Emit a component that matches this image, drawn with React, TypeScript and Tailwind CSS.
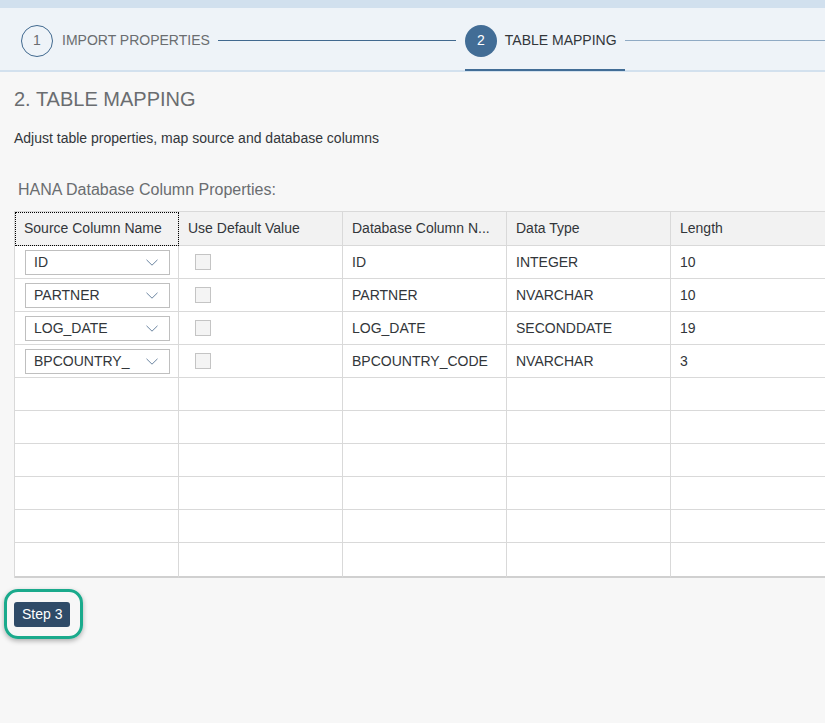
const ROWS = [
  { src: "ID", db: "ID", type: "INTEGER", len: "10" },
  { src: "PARTNER", db: "PARTNER", type: "NVARCHAR", len: "10" },
  { src: "LOG_DATE", db: "LOG_DATE", type: "SECONDDATE", len: "19" },
  { src: "BPCOUNTRY_", db: "BPCOUNTRY_CODE", type: "NVARCHAR", len: "3" },
];

const HEADERS = ["Source Column Name", "Use Default Value", "Database Column N...", "Data Type", "Length"];

const cell = "h-[33px] border-r border-b border-[#d9d9d9] bg-white flex items-center";

function Chevron() {
  return (
    <svg width="12" height="7" viewBox="0 0 12 7" fill="none" className="mr-[11px]">
      <path d="M0.5 0.8 L6 6.2 L11.5 0.8" stroke="#6a84a0" strokeWidth="1" />
    </svg>
  );
}

export default function App() {
  return (
    <div className="w-[825px] h-[723px] overflow-hidden bg-[#f7f7f7] font-['Liberation_Sans',Arial,sans-serif] text-[#32363a]">
      {/* wizard header */}
      <div className="h-2 bg-[#d1e0ee]" />
      <div className="h-[64px] bg-[#eef3f8] border-b-2 border-[#d3e1ee] flex items-center pl-[21px] pt-[3px]">
        <div className="w-8 h-8 rounded-full border border-[#41698f] flex items-center justify-center text-[14px] text-[#6a6d70]">1</div>
        <span className="ml-[9px] text-[14px] text-[#6a6d70]">IMPORT PROPERTIES</span>
        <div className="ml-2 w-[238px] h-px bg-[#41698f]" />
        <div className="relative ml-[9px] flex items-center h-full">
          <div className="w-8 h-8 rounded-full bg-[#426d96] flex items-center justify-center text-[14px] text-white">2</div>
          <span className="ml-[8px] text-[14px] text-[#32363a]">TABLE MAPPING</span>
          <div className="absolute left-0 w-[160px] -bottom-[1px] h-[2px] bg-[#426d96]" />
        </div>
        <div className="ml-2 flex-1 h-px bg-[#8faac4]" />
      </div>

      <div className="px-[14px]">
        <h1 className="mt-[15px] text-[20px] leading-6 text-[#6a6d70]">2. TABLE MAPPING</h1>
        <p className="mt-[19px] text-[14px] leading-4">Adjust table properties, map source and database columns</p>
        <h2 className="mt-[34px] ml-1 text-[16px] leading-5 text-[#6a6d70]">HANA Database Column Properties:</h2>

        <div className="mt-[11px] w-[900px] border-l border-t border-[#d9d9d9]">
          <div className="grid grid-cols-[164px_164px_164px_164px_244px]">
            {HEADERS.map((h, i) => (
              <div
                key={h}
                className={`h-[34px] border-r border-b border-[#d9d9d9] bg-[#f2f2f2] flex items-center pl-[9px] text-[14px] ${
                  i === 0 ? "outline outline-1 outline-dotted outline-black -outline-offset-1" : ""
                }`}
              >
                {h}
              </div>
            ))}
          </div>
          {ROWS.map((r) => (
            <div key={r.src} className="grid grid-cols-[164px_164px_164px_164px_244px] text-[14px]">
              <div className={cell + " pl-[10px]"}>
                <div className="w-[145px] h-[25px] border border-[#bfbfbf] bg-white flex items-center justify-between pl-[8px]">
                  <span>{r.src}</span>
                  <Chevron />
                </div>
              </div>
              <div className={cell + " pl-4"}>
                <div className="w-4 h-4 border border-[#c4c4c4] bg-[#f4f4f4]" />
              </div>
              <div className={cell + " pl-[9px]"}>{r.db}</div>
              <div className={cell + " pl-[9px]"}>{r.type}</div>
              <div className={cell + " pl-[9px]"}>{r.len}</div>
            </div>
          ))}
          {[0, 1, 2, 3, 4, 5].map((k) => (
            <div key={k} className="grid grid-cols-[164px_164px_164px_164px_244px]">
              {[0, 1, 2, 3, 4].map((c) => (
                <div key={c} className={cell + (k === 5 ? " h-[35px] border-b-2 border-b-[#d0d0d0]" : "")} />
              ))}
            </div>
          ))}
        </div>

        <div className="mt-[11px] -ml-[10px] w-[79px] h-[50px] rounded-[14px] border-[3px] border-[#1aaa8c] shadow-[0_2px_5px_rgba(0,0,0,0.3)] flex items-center pl-[7px]">
          <button className="h-[25px] px-[8px] rounded-[3px] bg-[#2f4b68] text-white text-[14px] leading-none">Step 3</button>
        </div>
      </div>
    </div>
  );
}
